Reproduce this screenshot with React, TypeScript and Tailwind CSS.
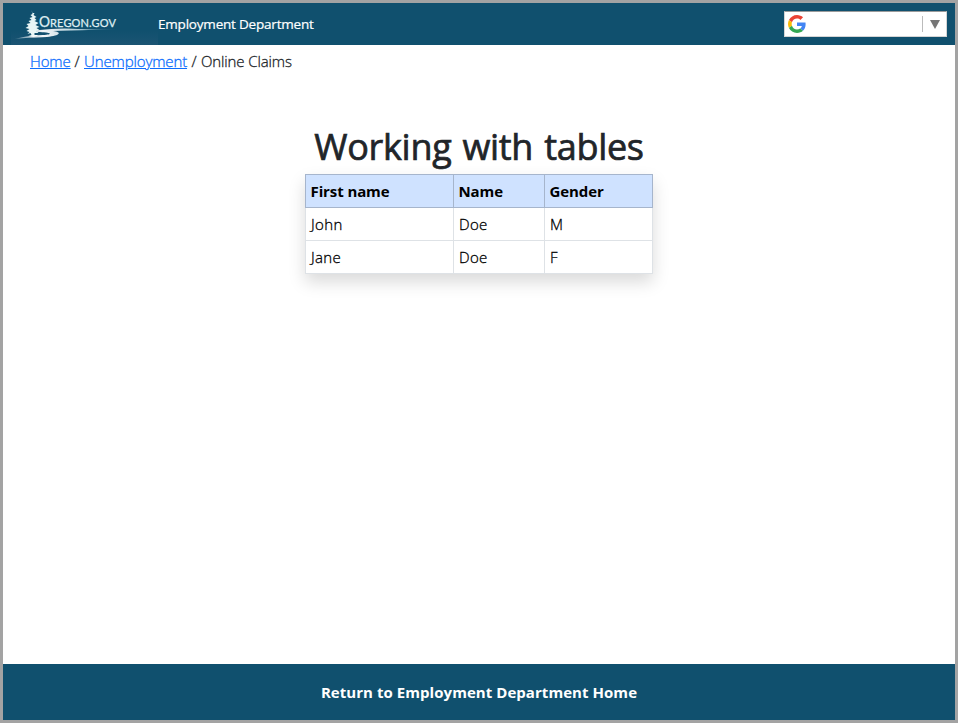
function OregonLogo() {
  return (
    <svg width="147" height="36" viewBox="0 0 147 36" className="block" role="img" aria-label="Oregon.gov">
      <defs>
        <linearGradient id="river" x1="0" x2="1">
          <stop offset="0" stopColor="#fff" stopOpacity="0.3" />
          <stop offset="0.25" stopColor="#fff" stopOpacity="0.95" />
          <stop offset="0.6" stopColor="#d5eaf0" stopOpacity="0.8" />
          <stop offset="1" stopColor="#a9cfdb" stopOpacity="0" />
        </linearGradient>
        <linearGradient id="backdrop" x1="0" x2="0" y1="0" y2="1">
          <stop offset="0.6" stopColor="#10506e" />
          <stop offset="1" stopColor="#1b5473" />
        </linearGradient>
      </defs>
      <rect width="147" height="36" fill="url(#backdrop)" />
      <path
        d="M14 2l1 3 2 0-1 2 3 2-2 1 2 2-2 1 4 2-3 2 4 2-3 1 3 2-3 1 2 2-4 0 0 2 3 0 0 1-4 1-5-1 3-1-1-2-3 1 2-2-3-1 3-2-4-1 3-2-2-2 4-1-2-2 3-1-2-2 3-1-2-2 2-1z"
        fill="#e9f6f6"
        transform="translate(6.5 -1)"
      />
      <path
        d="M26 21.3 Q46 19 62 19.8 T116 19.8 Q80 21 60 21.5 Q48 21.5 42 22 C51 23 50 26.5 36 28 C22 29 14 28.5 4 30 Q18 26 32 26 C42 25.5 42 23.5 26 23z"
        fill="url(#river)"
      />
      <g fill="#dfeef2" stroke="#dfeef2" strokeWidth="0.25" fontFamily="Lato, 'Open Sans', sans-serif">
        <text x="28" y="18" fontSize="14.5" textLength="11" lengthAdjust="spacingAndGlyphs">O</text>
        <text x="39" y="18" fontSize="11" textLength="66" lengthAdjust="spacing">REGON.GOV</text>
      </g>
    </svg>
  );
}

function GoogleMark() {
  return (
    <svg width="18" height="18" viewBox="0 0 48 48" aria-hidden="true">
      <path fill="#EA4335" d="M24 9.5c3.54 0 6.71 1.22 9.21 3.6l6.85-6.85C35.9 2.38 30.47 0 24 0 14.62 0 6.51 5.38 2.56 13.22l7.98 6.19C12.43 13.72 17.74 9.5 24 9.5z" />
      <path fill="#4285F4" d="M46.98 24.55c0-1.57-.15-3.09-.38-4.55H24v9.02h12.94c-.58 2.96-2.26 5.48-4.78 7.18l7.73 6c4.51-4.18 7.09-10.36 7.09-17.65z" />
      <path fill="#FBBC05" d="M10.53 28.59c-.48-1.45-.76-2.99-.76-4.59s.27-3.14.76-4.59l-7.98-6.19C.92 16.46 0 20.12 0 24c0 3.88.92 7.54 2.56 10.78l7.97-6.19z" />
      <path fill="#34A853" d="M24 48c6.48 0 11.93-2.13 15.89-5.81l-7.73-6c-2.15 1.45-4.92 2.3-8.16 2.3-6.26 0-11.57-4.22-13.47-9.91l-7.98 6.19C6.51 42.62 14.62 48 24 48z" />
    </svg>
  );
}

const people = [
  ["John", "Doe", "M"],
  ["Jane", "Doe", "F"],
];

export default function App() {
  return (
    <div className="flex h-[723px] w-[958px] flex-col border-[3px] border-[#a3a3a3] bg-white font-['Open_Sans','Noto_Sans',sans-serif]">
      <header className="flex h-[42px] shrink-0 items-center bg-[#10506e] pl-2 pr-2">
        <div className="mt-[5px] w-[147px]"><OregonLogo /></div>
        <span className="-mt-px text-[13.5px] leading-5 tracking-[-0.2px] text-white [-webkit-text-stroke:0.2px_white]">Employment Department</span>
        <div className="ml-auto flex h-[26px] w-[163px] items-center border border-[#d5d5d5] border-t-[#9b9b9b] bg-white pl-[3px]">
          <GoogleMark />
          <div className="ml-auto flex h-4 w-[24px] items-center justify-center border-l border-[#bbb]">
            <svg width="10" height="9" viewBox="0 0 10 9" aria-hidden="true"><path d="M0 0h10L5 9z" fill="#767676" /></svg>
          </div>
        </div>
      </header>

      <nav className="mt-1 flex h-6 items-center pl-[27px] text-[15px] font-light leading-6 tracking-[-0.12px] text-[#212529] [-webkit-text-stroke:0.3px]">
        <a href="#" className="w-[40px] whitespace-nowrap text-[#0d6efd] underline">Home</a>
        <span className="w-[14px] text-center">/</span>
        <a href="#" className="w-[103px] whitespace-nowrap text-[#0d6efd] underline">Unemployment</a>
        <span className="w-[14px] text-center">/</span>
        <span className="whitespace-nowrap">Online Claims</span>
      </nav>

      <main className="flex grow flex-col items-center pt-[50px]">
        <h1 className="mb-[3px] h-[48px] whitespace-nowrap text-[36px] font-medium leading-[48px] tracking-[-0.3px] text-[#212529] [-webkit-text-stroke:0.7px] [word-spacing:2px]">Working with tables</h1>
        <table className="w-[348px] table-fixed border-collapse text-left text-[15px] leading-6 text-black shadow-[0_8px_16px_rgba(0,0,0,0.15)]">
          <colgroup>
            <col className="w-[148px]" />
            <col className="w-[91px]" />
            <col className="w-[108px]" />
          </colgroup>
          <thead>
            <tr className="h-[33px] bg-[#cfe2ff]">
              {["First name", "Name", "Gender"].map((label) => (
                <th key={label} className="border border-[#a6b5cc] p-1 pl-[4.5px] font-bold tracking-[-0.1px]">{label}</th>
              ))}
            </tr>
          </thead>
          <tbody>
            {people.map((row) => (
              <tr key={row[0]} className="h-[33px] bg-white">
                {row.map((cell, i) => (
                  <td key={i} className="border border-[#dee2e6] p-1 pl-[5px] font-light tracking-[0.35px] [-webkit-text-stroke:0.3px]">{cell}</td>
                ))}
              </tr>
            ))}
          </tbody>
        </table>
      </main>

      <footer className="flex h-14 shrink-0 items-center justify-center bg-[#10506e] text-[15px] font-bold tracking-[0.05px] text-white">
        <a href="#">Return to Employment Department Home</a>
      </footer>
    </div>
  );
}
